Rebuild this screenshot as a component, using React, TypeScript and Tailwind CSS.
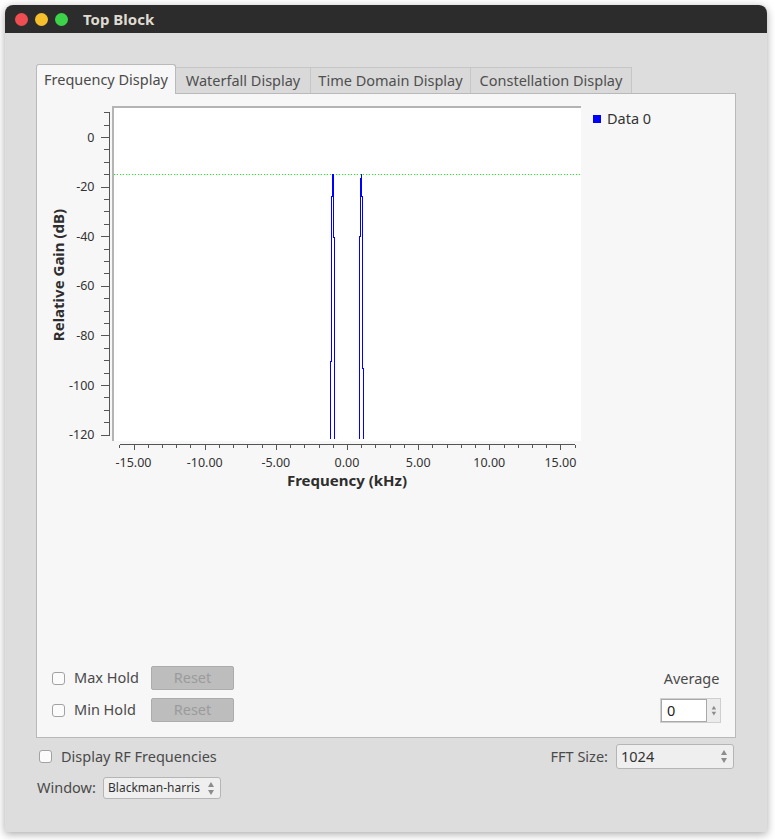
import React from 'react';

const font = { fontFamily: '"Noto Sans", "DejaVu Sans", sans-serif' };

// y: dB -> local svg y ; x: kHz -> local svg x
const yOf = (v: number) => 43 - v * 2.48;
const xOf = (f: number) => 310 + f * 14.23;

function Chart() {
  const yTicks: number[] = [];
  for (let v = 10; v >= -120; v -= 5) yTicks.push(v);
  const xTicks: number[] = [];
  for (let f = -16; f <= 16; f++) xTicks.push(f);

  return (
    <svg width={550} height={400} className="block shrink-0" style={font}>
      {/* canvas */}
      <rect x={77} y={14} width={467} height={333} fill="#ffffff" />
      <rect x={75} y={12} width={2} height={335} fill="#b4b4b4" />
      <rect x={75} y={12} width={469} height={2} fill="#b4b4b4" />

      {/* threshold */}
      <line x1={77} x2={544} y1={80.5} y2={80.5} stroke="#00ff00" strokeDasharray="1 2" />

      {/* spectrum */}
      <g fill="none" stroke="#0000ff" strokeWidth={1} shapeRendering="crispEdges">
        <path d="M293.5 345 V267 H294.5 V102 H295.5 V80 H296.5 V143 H297.5 V345" />
        <path d="M322.5 345 V142 H323.5 V84 H324.5 V80 V102 H325.5 V274 H326.5 V345" />
      </g>

      {/* y axis */}
      <g stroke="#555555" shapeRendering="crispEdges">
        <line x1={72.5} x2={72.5} y1={18} y2={341} />
        {yTicks.map(v => (
          <line key={v} x1={v % 20 === 0 ? 64 : 67} x2={73} y1={Math.round(yOf(v)) + 0.5} y2={Math.round(yOf(v)) + 0.5} />
        ))}
      </g>
      <g fill="#333333" fontSize={12.5} textAnchor="end">
        {yTicks.filter(v => v % 20 === 0).map(v => (
          <text key={v} x={57.5} y={yOf(v)} dominantBaseline="central">{v}</text>
        ))}
      </g>

      {/* x axis */}
      <g stroke="#555555" shapeRendering="crispEdges">
        <line x1={83} x2={538} y1={350.5} y2={350.5} />
        {xTicks.map(f => (
          <line key={f} x1={Math.round(xOf(f)) + 0.5} x2={Math.round(xOf(f)) + 0.5} y1={351} y2={f % 5 === 0 ? 356 : 354} />
        ))}
      </g>
      <g fill="#333333" fontSize={12.5} textAnchor="middle">
        {[-15, -10, -5, 0, 5, 10, 15].map(f => (
          <text key={f} x={xOf(f)} y={368} dominantBaseline="central">{f.toFixed(2)}</text>
        ))}
      </g>

      <text x={310} y={385.5} dominantBaseline="central" textAnchor="middle" fontWeight="bold" fontSize={15} fill="#2e2e2e">
        Frequency (kHz)
      </text>
      <text
        x={21}
        y={181}
        dominantBaseline="central"
        textAnchor="middle"
        fontWeight="bold"
        fontSize={15}
        fill="#2e2e2e"
        transform="rotate(-90 21 181)"
      >
        Relative Gain (dB)
      </text>
    </svg>
  );
}

function Checkbox() {
  return <div className="w-[13px] h-[13px] rounded-[3px] border border-[#a2a2a2] bg-[#fbfbfb] shrink-0" />;
}

function Arrows() {
  return (
    <div className="flex flex-col items-center gap-[3px]">
      <div className="w-0 h-0 border-x-[3.5px] border-x-transparent border-b-[5px] border-b-[#8c8c8c]" />
      <div className="w-0 h-0 border-x-[3.5px] border-x-transparent border-t-[5px] border-t-[#8c8c8c]" />
    </div>
  );
}

export default function App() {
  const tabs = [
    { label: 'Waterfall Display', w: 'w-[135px]' },
    { label: 'Time Domain Display', w: 'w-[160px]' },
    { label: 'Constellation Display', w: 'w-[161px]' },
  ];

  return (
    <div className="min-h-screen bg-white pt-[5px] pl-[5px] text-[#4a4a4a]" style={font}>
      <div className="w-[762px] h-[827px] flex flex-col rounded-t-[8px] overflow-hidden shadow-[0_2px_8px_rgba(0,0,0,0.35)]">
        {/* title bar */}
        <div className="h-[28px] bg-[#2c2c2c] flex items-center pl-[10px] shrink-0">
          <div className="flex gap-[7px]">
            <span className="w-[13px] h-[13px] rounded-full bg-[#ee4d52]" />
            <span className="w-[13px] h-[13px] rounded-full bg-[#f6bf2c]" />
            <span className="w-[13px] h-[13px] rounded-full bg-[#3cd24a]" />
          </div>
          <span className="ml-[15px] text-[15px] font-bold text-[#dfdbd2]">Top Block</span>
        </div>

        {/* body */}
        <div className="flex-1 bg-[#dddddd] pt-[31px] pl-[31px]">
          <div className="flex items-end h-[29px] relative z-10">
            <div className="w-[140px] h-[30px] -mb-px bg-[#f7f7f7] border border-b-0 border-[#b9b9b9] rounded-t-[3px] flex items-center justify-center text-[14.5px] text-[#4a4a4a]">
              Frequency Display
            </div>
            {tabs.map(t => (
              <div
                key={t.label}
                className={`${t.w} h-[26px] bg-[#d9d9d9] border-t border-r border-[#c6c6c6] flex items-center justify-center text-[14.5px] text-[#4f4f4f]`}
              >
                {t.label}
              </div>
            ))}
          </div>

          {/* pane */}
          <div className="w-[700px] h-[645px] bg-[#f7f7f7] border border-[#b9b9b9] flex flex-col justify-between">
            <div className="flex">
              <Chart />
              <div className="ml-[6px] mt-[18px] flex items-center h-[14px] gap-[6px] text-[14.5px] text-[#333333]">
                <span className="w-[8px] h-[8px] bg-[#0000ff]" />
                <span>Data 0</span>
              </div>
            </div>

            <div className="flex justify-between items-end pl-[15px] pr-[13px] pb-[14px]">
              <div className="flex flex-col gap-[8px] mb-px">
                <div className="flex items-center h-[24px]">
                  <Checkbox />
                  <span className="ml-[9px] w-[77px] text-[14.5px]">Max Hold</span>
                  <button className="w-[83px] h-[24px] bg-[#bdbdbd] border border-[#acacac] rounded-[2px] text-[14.5px] text-[#9b9b9b]">Reset</button>
                </div>
                <div className="flex items-center h-[24px]">
                  <Checkbox />
                  <span className="ml-[9px] w-[77px] text-[14.5px]">Min Hold</span>
                  <button className="w-[83px] h-[24px] bg-[#bdbdbd] border border-[#acacac] rounded-[2px] text-[14.5px] text-[#9b9b9b]">Reset</button>
                </div>
              </div>
              <div className="flex flex-col items-center gap-[11px] mr-px">
                <span className="text-[14.5px] h-[18px] leading-[18px] pl-[2px]">Average</span>
                <div className="flex w-[61px] h-[25px] border border-[#cfcfcf] bg-[#ececec]">
                  <div className="w-[46px] bg-white border border-[#a9a9a9] text-[14.5px] text-[#222] pl-[5px] leading-[21px]">0</div>
                  <div className="flex-1 flex items-center justify-center scale-75">
                    <Arrows />
                  </div>
                </div>
              </div>
            </div>
          </div>

          {/* below pane */}
          <div className="w-[700px] mt-[6px] flex items-center justify-between h-[25px]">
            <div className="flex items-center pl-[3px]">
              <Checkbox />
              <span className="ml-[9px] text-[14.5px]">Display RF Frequencies</span>
            </div>
            <div className="flex items-center gap-[8px] pr-[2px]">
              <span className="text-[14.5px]">FFT Size:</span>
              <div className="w-[118px] h-[25px] bg-[#efefef] border border-[#b5b5b5] rounded-[3px] flex items-center justify-between pl-[4px] pr-[6px] text-[14.5px] text-[#333]">
                <span>1024</span>
                <Arrows />
              </div>
            </div>
          </div>
          <div className="mt-[8px] flex items-center h-[22px] pl-[1px]">
            <span className="w-[66px] text-[14.5px]">Window:</span>
            <div className="w-[118px] h-[22px] bg-[#efefef] border border-[#b5b5b5] rounded-[3px] flex items-center justify-between pl-[4px] pr-[6px] text-[12px] text-[#333]">
              <span>Blackman-harris</span>
              <Arrows />
            </div>
          </div>
        </div>
      </div>
    </div>
  );
}
